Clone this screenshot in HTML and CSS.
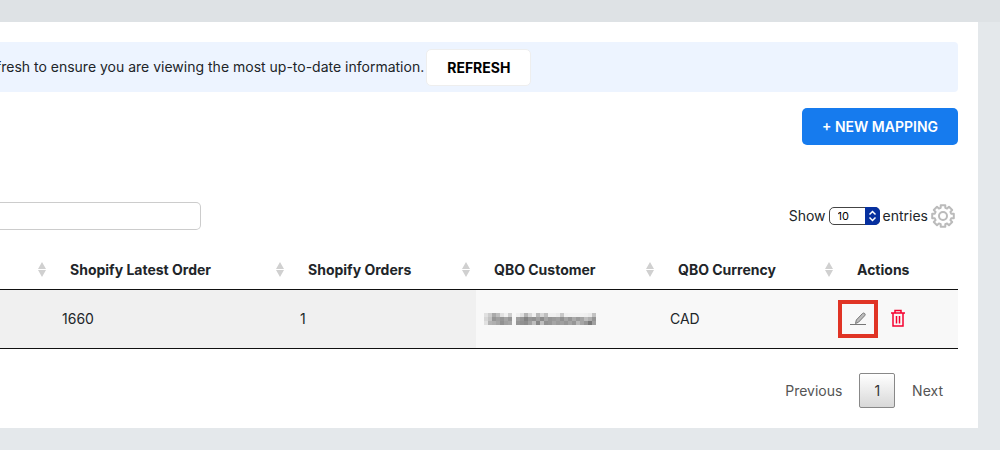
FILE: index.html
```html
<!DOCTYPE html>
<html lang="en">
<head>
  <meta charset="UTF-8" />
  <meta name="viewport" content="width=device-width, initial-scale=1" />
  <title>Mappings</title>
  <link rel="stylesheet" href="styles.css">
</head>
<body>
<header class="topbar"></header>

<main class="card">
  <div class="notice">
    <span class="notice-text">fresh to ensure you are viewing the most up-to-date information.</span>
    <button type="button" class="btn btn-refresh">REFRESH</button>
  </div>

  <div class="actions-bar">
    <button type="button" class="btn btn-primary">+ NEW MAPPING</button>
  </div>

  <div class="toolbar">
    <input type="search" class="search" aria-label="Search mappings" />
    <div class="length">
      <label for="pageLength">Show</label>
      <span class="select-wrap">
        <select id="pageLength" name="pageLength">
          <option value="10" selected>10</option>
          <option value="25">25</option>
          <option value="50">50</option>
        </select>
        <svg class="select-arrows" viewBox="0 0 15 18" aria-hidden="true">
          <path d="M4.5 7.5l3-3 3 3M4.5 10.5l3 3 3-3" />
        </svg>
      </span>
      <span>entries</span>
      <button type="button" class="icon-btn" aria-label="Table settings">
        <svg class="gear" viewBox="0 0 24 24">
          <path d="M9.7 1.2H14.3V3.8L16.1 4.6 18 2.8 21.2 6 19.4 7.9 20.2 9.7H22.8V14.3H20.2L19.4 16.1 21.2 18 18 21.2 16.1 19.4 14.3 20.2V22.8H9.7V20.2L7.9 19.4 6 21.2 2.8 18 4.6 16.1 3.8 14.3H1.2V9.7H3.8L4.6 7.9 2.8 6 6 2.8 7.9 4.6 9.7 3.8z" />
          <circle cx="12" cy="12" r="4" />
        </svg>
      </button>
    </div>
  </div>

  <table class="mappings">
    <colgroup>
      <col />
      <col class="col-latest" />
      <col class="col-orders" />
      <col class="col-customer" />
      <col class="col-currency" />
      <col class="col-actions" />
    </colgroup>
    <thead>
      <tr>
        <th><div class="sortable"><span></span><svg viewBox="0 0 8 15"><path d="M4 0l4 7H0zM0 8h8l-4 7z" /></svg></div></th>
        <th><div class="sortable"><span>Shopify Latest Order</span><svg viewBox="0 0 8 15"><path d="M4 0l4 7H0zM0 8h8l-4 7z" /></svg></div></th>
        <th><div class="sortable"><span>Shopify Orders</span><svg viewBox="0 0 8 15"><path d="M4 0l4 7H0zM0 8h8l-4 7z" /></svg></div></th>
        <th><div class="sortable"><span>QBO Customer</span><svg viewBox="0 0 8 15"><path d="M4 0l4 7H0zM0 8h8l-4 7z" /></svg></div></th>
        <th><div class="sortable"><span>QBO Currency</span><svg viewBox="0 0 8 15"><path d="M4 0l4 7H0zM0 8h8l-4 7z" /></svg></div></th>
        <th>Actions</th>
      </tr>
    </thead>
    <tbody>
      <tr>
        <td class="sorted"></td>
        <td class="sorted">1660</td>
        <td class="sorted">1</td>
        <td class="customer">
          <svg class="redacted" id="maskedName" viewBox="0 0 28 3" role="img" aria-label="Hidden customer name"></svg>
        </td>
        <td>CAD</td>
        <td>
          <div class="row-actions">
            <button type="button" class="icon-btn edit" aria-label="Edit mapping">
              <svg viewBox="0 0 16 16">
                <path d="M0 13.5h16" />
                <path class="pencil" d="M5.5 12.5l.8-3.500 6.200-6.500q1.200-1 2.200 0t0 2.200L8.500 11.200z" />
              </svg>
            </button>
            <button type="button" class="icon-btn delete" aria-label="Delete mapping">
              <svg viewBox="0 0 16 20">
                <path d="M1 4h14M5 4V1.5h6V4M3 4v13h10V4M6.5 7v7.5M9.500 7v7.500" />
              </svg>
            </button>
          </div>
        </td>
      </tr>
    </tbody>
  </table>

  <nav class="pagination" aria-label="Pages">
    <a href="#">Previous</a>
    <a href="#" class="current">1</a>
    <a href="#">Next</a>
  </nav>
</main>

<script>
  // Mosaic over the customer name, one grey level per block
  const blocks = [
    [225, 205, 170, 190, 225, 240, 205, 248, 240, 225, 180, 215, 240, 185, 215, 190, 240, 240, 235, 200, 240, 242, 242, 242, 242, 240, 235, 195],
    [215, 195, 150, 160, 150, 165, 150, 246, 160, 150, 130, 150, 145, 160, 140, 165, 150, 155, 160, 145, 165, 150, 170, 155, 165, 190, 175, 150],
    [225, 180, 175, 165, 145, 160, 165, 246, 150, 145, 140, 160, 190, 135, 190, 145, 150, 165, 155, 160, 150, 165, 150, 185, 165, 150, 120, 160]
  ];
  const mask = document.getElementById('maskedName');
  blocks.forEach((row, y) => {
    row.forEach((level, x) => {
      const rect = document.createElementNS('http://www.w3.org/2000/svg', 'rect');
      rect.setAttribute('x', x);
      rect.setAttribute('y', y);
      rect.setAttribute('width', 1);
      rect.setAttribute('height', 1);
      rect.setAttribute('fill', `rgb(${level}, ${level}, ${level})`);
      mask.appendChild(rect);
    });
  });
</script>
</body>
</html>
```

FILE: styles.css
```css
:root {
  --page: #e4e8eb;
  --primary: #167bee;
  --text: #212529;
}

* {
  box-sizing: border-box;
}

body {
  margin: 0;
  background: var(--page);
  color: var(--text);
  font-family: Inter, "Liberation Sans", sans-serif;
  font-size: 14px;
  line-height: 20px;
}

button, select, input {
  font-family: inherit;
}

.topbar {
  height: 22px;
  background: #dee2e5;
}

.card {
  margin-right: 22px;
  padding: 20px 20px 20px 0;
  background: #fff;
  overflow: hidden;
}

.notice {
  display: flex;
  align-items: center;
  height: 50px;
  background: #edf4ff;
  border-radius: 0 4px 4px 0;
}

/* the sentence runs in from the left edge */
.notice-text {
  margin-left: -4px;
  margin-right: 2px;
}

.btn {
  height: 37px;
  padding: 0 19px;
  border: 1px solid transparent;
  border-radius: 5px;
  font-size: 14px;
  font-weight: 600;
  cursor: pointer;
}

.btn-refresh {
  padding: 0 20px;
  background: #fff;
  border-color: #eee;
  color: #000;
  font-weight: 700;
}

.btn-primary {
  background: var(--primary);
  color: #fff;
}

.actions-bar {
  display: flex;
  justify-content: flex-end;
  margin-top: 16px;
}

.toolbar {
  display: flex;
  align-items: center;
  justify-content: space-between;
  margin-top: 57px;
}

.search {
  width: 201px;
  height: 28px;
  padding: 0 8px;
  border: 1px solid #ccc;
  border-left: none;
  border-radius: 0 5px 5px 0;
}

.length {
  display: flex;
  align-items: center;
  gap: 3px;
  padding-right: 3px;
}

.select-wrap {
  display: grid;
}

.select-wrap > * {
  grid-area: 1 / 1;
}

.select-wrap select {
  appearance: none;
  width: 51px;
  height: 18px;
  padding: 0 8px;
  border: 1px solid #444;
  border-radius: 5px;
  background: #fff;
  color: #000;
  font-size: 11px;
}

.select-arrows {
  justify-self: end;
  width: 15px;
  height: 18px;
  border-radius: 0 5px 5px 0;
  background: #06309f;
  fill: none;
  stroke: #fff;
  stroke-width: 1.5;
  pointer-events: none;
}

.icon-btn {
  display: flex;
  padding: 0;
  border: none;
  background: none;
  cursor: pointer;
}

.icon-btn svg {
  fill: none;
  stroke: currentColor;
}

.icon-btn .gear {
  width: 24px;
  height: 24px;
  color: #bbb;
  stroke-width: 2;
  stroke-linejoin: round;
}

.mappings {
  width: 100%;
  margin-top: 20px;
  border-collapse: separate;
  border-spacing: 0;
  border-bottom: 1px solid #111;
  table-layout: fixed;
}

.col-latest { width: 238px; }
.col-orders { width: 186px; }
.col-customer { width: 184px; }
.col-currency { width: 179px; }
.col-actions { width: 119px; }

.mappings th {
  height: 40px;
  padding: 0 6px 0 18px;
  border-bottom: 1px solid #111;
  font-weight: 700;
  text-align: left;
  white-space: nowrap;
}

.sortable {
  display: flex;
  align-items: center;
  justify-content: space-between;
}

.sortable svg {
  width: 8px;
  height: 15px;
  fill: #d0d0d0;
}

.mappings td {
  height: 58px;
  padding: 0 10px;
  background: #f8f8f8;
}

.mappings .sorted {
  background: #f0f0f0;
}

.mappings .customer {
  padding: 0 8px;
}

.redacted {
  display: block;
  width: 112px;
  height: 12px;
  shape-rendering: crispEdges;
}

.row-actions {
  display: flex;
  align-items: center;
  gap: 12px;
  margin-left: -11px;
}

.edit {
  padding: 7px 8px;
  border: 4px solid #e03425;
  color: #777;
}

.edit svg {
  width: 16px;
  height: 16px;
}

.edit .pencil {
  fill: #bbb;
}

.delete {
  color: #f5002f;
}

.delete svg {
  width: 16px;
  height: 20px;
  stroke-width: 1.5;
}

.pagination {
  display: flex;
  align-items: center;
  justify-content: flex-end;
  gap: 2px;
  margin-top: 24px;
}

.pagination a {
  padding: 7px 14px 6px;
  border: 1px solid transparent;
  border-radius: 2px;
  color: #555;
  text-decoration: none;
}

.pagination .current {
  border-color: #888;
  background: linear-gradient(#fff, #d8d8d8);
  color: #333;
}
```
